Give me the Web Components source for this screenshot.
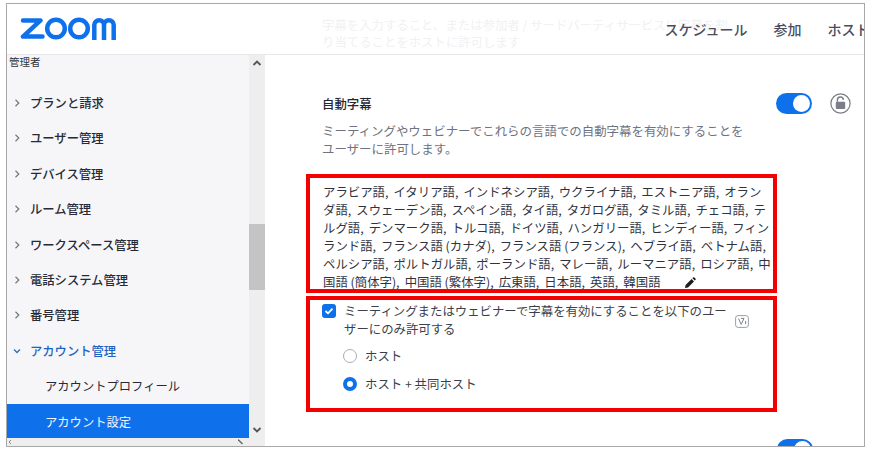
<!DOCTYPE html>
<html lang="ja">
<head>
<meta charset="utf-8">
<title>アカウント設定</title>
<style>
html, body { margin: 0; padding: 0; background: #fff; }
body { font-family: "Noto Sans CJK JP", "Noto Sans", sans-serif; width: 874px; height: 458px; overflow: hidden; }
</style>
</head>
<body>
<zoom-window>
  <zoom-header></zoom-header>
  <zoom-sidebar>
    <nav-item>プランと請求</nav-item>
    <nav-item>ユーザー管理</nav-item>
    <nav-item>デバイス管理</nav-item>
    <nav-item>ルーム管理</nav-item>
    <nav-item>ワークスペース管理</nav-item>
    <nav-item>電話システム管理</nav-item>
    <nav-item>番号管理</nav-item>
    <nav-item state="open">アカウント管理</nav-item>
    <nav-item state="sub">アカウントプロフィール</nav-item>
    <nav-item state="active">アカウント設定</nav-item>
  </zoom-sidebar>
  <caption-settings></caption-settings>
</zoom-window>

<script>
class ZoomWindow extends HTMLElement {
    connectedCallback() {
        this.attachShadow({ mode: 'open' });
        this.shadowRoot.innerHTML = `
            <style>
                :host {
                    display: grid;
                    grid-template-columns: 258px 1fr;
                    grid-template-rows: 51px 1fr;
                    box-sizing: border-box;
                    width: 859px;
                    height: 444px;
                    margin: 3px 0 0 6px;
                    border: 1px solid #a8a8a8;
                    overflow: hidden;
                }
                ::slotted(zoom-header) { grid-column: 1 / 3; }
            </style>
            <slot></slot>
        `;
    }
}

class ZoomHeader extends HTMLElement {
    connectedCallback() {
        this.attachShadow({ mode: 'open' });
        this.shadowRoot.innerHTML = `
            <style>
                :host {
                    display: flex;
                    align-items: center;
                    position: relative;
                    box-sizing: border-box;
                    height: 51px;
                    padding-left: 13px;
                    border-bottom: 1px solid #e8e8e8;
                    overflow: hidden;
                }
                svg { display: block; margin-top: -1px; }
                .ghost {
                    position: absolute;
                    left: 315px;
                    top: 13px;
                    width: 418px;
                    font-size: 12.4px;
                    line-height: 17px;
                    color: #f0f1f3;
                }
                nav {
                    position: relative;
                    display: flex;
                    gap: 26px;
                    margin-left: auto;
                    margin-right: -5.5px;
                    font-size: 14px;
                    font-weight: 500;
                    color: #4a4d5e;
                    white-space: nowrap;
                }
            </style>
            <svg width="97" height="23" viewBox="0 0 97 23" fill="none" stroke="#0e71eb" stroke-width="4.5">
                <path d="M3 3.4H20.5L3 19.6H22.5" stroke-linejoin="round" stroke-linecap="round"/>
                <circle cx="36" cy="11.5" r="8.8"/>
                <circle cx="59" cy="11.5" r="8.8"/>
                <path d="M74.3 23V8A4.85 4.85 0 0 1 84 8V23M84 8A4.85 4.85 0 0 1 93.7 8V23"/>
            </svg>
            <div class="ghost">字幕を入力すること、または参加者 / サードパーティサービスに字幕を割り当てることをホストに許可します</div>
            <nav><span>スケジュール</span><span>参加</span><span>ホスト</span></nav>
        `;
    }
}

class ZoomSidebar extends HTMLElement {
    connectedCallback() {
        this.attachShadow({ mode: 'open' });
        this.shadowRoot.innerHTML = `
            <style>
                :host {
                    display: grid;
                    grid-template-columns: 242px 16px;
                    grid-template-rows: 1fr 8px;
                    min-height: 0;
                    overflow: hidden;
                }
                .list {
                    grid-column: 1;
                    grid-row: 1;
                    display: flex;
                    flex-direction: column;
                    min-height: 0;
                    background: #f6f6f9;
                    overflow: hidden;
                }
                .role {
                    flex: none;
                    height: 30.4px;
                    padding-left: 2px;
                    font-size: 10.5px;
                    line-height: 14px;
                    color: #33363f;
                }
                .vbar {
                    grid-column: 2;
                    grid-row: 1 / 3;
                    display: flex;
                    flex-direction: column;
                    align-items: center;
                    background: #eeeeee;
                }
                .vbar svg { margin: 5px 0; flex: none; }
                .vbar svg:last-child { margin-bottom: 13px; }
                .thumb {
                    align-self: stretch;
                    height: 66px;
                    margin-top: 153px;
                    margin-bottom: auto;
                    background: #c4c4c4;
                }
                .hbar {
                    grid-column: 1;
                    grid-row: 2;
                    display: flex;
                    justify-content: space-between;
                    align-items: center;
                    padding: 0 6px 0 1px;
                    background: #eeeeee;
                }
            </style>
            <div class="list">
                <div class="role">管理者</div>
                <slot></slot>
            </div>
            <div class="vbar">
                <svg width="10" height="6" viewBox="0 0 10 6" fill="none" stroke="#555" stroke-width="1.8"><path d="M1.5 5L5 1.5 8.5 5"/></svg>
                <div class="thumb"></div>
                <svg width="10" height="6" viewBox="0 0 10 6" fill="none" stroke="#555" stroke-width="1.8"><path d="M1.5 1L5 4.5 8.5 1"/></svg>
            </div>
            <div class="hbar">
                <svg width="3" height="6" viewBox="0 0 3 6" fill="none" stroke="#888"><path d="M3 1L1 3l2 2"/></svg>
                <svg width="5" height="6" viewBox="0 0 5 6" fill="none" stroke="#666" stroke-width="1.4"><path d="M0 0.5L4.5 5"/></svg>
            </div>
        `;
    }
}

class NavItem extends HTMLElement {
    connectedCallback() {
        this.attachShadow({ mode: 'open' });
        const state = this.getAttribute('state') || '';
        const chevron = state === 'open'
            ? '<svg width="8" height="8" viewBox="0 0 8 8" fill="none" stroke="#2d6fc4" stroke-width="1.3"><path d="M1 2.5L4 5.5 7 2.5"/></svg>'
            : state === '' ? '<svg width="8" height="8" viewBox="0 0 8 8" fill="none" stroke="#777" stroke-width="1.2"><path d="M2.5 .8L5.8 4 2.5 7.2"/></svg>' : '';
        this.shadowRoot.innerHTML = `
            <style>
                :host {
                    display: flex;
                    align-items: center;
                    flex: none;
                    height: 35.4px;
                    padding-left: 6px;
                    font-size: 12.3px;
                    font-weight: 500;
                    color: #272a35;
                    white-space: nowrap;
                }
                :host([state="open"]) { color: #1b64c4; }
                :host([state="sub"]), :host([state="active"]) { padding-left: 38px; font-weight: 400; }
                :host([state="active"]) { background: #0e71eb; color: #eef5ff; }
                svg { flex: none; margin-right: 9px; }
            </style>
            ${chevron}<slot></slot>
        `;
    }
}

class ToggleSwitch extends HTMLElement {
    connectedCallback() {
        this.attachShadow({ mode: 'open' });
        this.shadowRoot.innerHTML = `
            <style>
                :host {
                    display: flex;
                    justify-content: flex-end;
                    align-items: center;
                    box-sizing: border-box;
                    flex: none;
                    width: 36px;
                    height: 21px;
                    padding: 2px;
                    border-radius: 11px;
                    background: #0e71eb;
                }
                i { display: block; width: 17px; height: 17px; border-radius: 50%; background: #fff; }
            </style>
            <i></i>
        `;
    }
}

class LockIcon extends HTMLElement {
    connectedCallback() {
        this.attachShadow({ mode: 'open' });
        this.shadowRoot.innerHTML = `
            <style>:host { display: block; flex: none; width: 21px; height: 21px; } svg { display: block; }</style>
            <svg width="21" height="21" viewBox="0 0 21 21" fill="none">
                <circle cx="10.5" cy="10.5" r="9.6" stroke="#7a7e88" stroke-width="1.2"/>
                <path d="M7.4 8.8V7.2a3 3 0 0 1 6 -.3" stroke="#7a7e88" stroke-width="1.4"/>
                <rect x="5.8" y="8.8" width="9.4" height="7.2" rx="1" fill="#7a7e88"/>
            </svg>
        `;
    }
}

class RadioOption extends HTMLElement {
    connectedCallback() {
        this.attachShadow({ mode: 'open' });
        this.shadowRoot.innerHTML = `
            <style>
                :host {
                    display: flex;
                    align-items: center;
                    gap: 8px;
                    height: 14px;
                    font-size: 12.4px;
                    color: #3c3f4b;
                }
                .dot {
                    box-sizing: border-box;
                    flex: none;
                    width: 14px;
                    height: 14px;
                    border: 1px solid #a9adb5;
                    border-radius: 50%;
                    background: #fff;
                }
                :host([checked]) .dot { border: 4px solid #0e71eb; }
            </style>
            <span class="dot"></span><slot></slot>
        `;
    }
}

class CaptionSettings extends HTMLElement {
    connectedCallback() {
        this.attachShadow({ mode: 'open' });
        this.shadowRoot.innerHTML = `
            <style>
                :host {
                    display: block;
                    min-height: 0;
                    padding: 38px 0 0 41px;
                    overflow: hidden;
                    font-size: 12.4px;
                    color: #23252f;
                }
                .head {
                    display: flex;
                    align-items: center;
                    width: 545px;
                    padding-left: 16px;
                    box-sizing: border-box;
                }
                .head b { flex: 1; font-weight: 500; color: #23252f; }
                .head lock-icon { margin-left: 18px; }
                .desc {
                    width: 425px;
                    margin: 8px 0 0 16px;
                    font-size: 12.45px;
                    line-height: 18px;
                    color: #6e7380;
                }
                .box {
                    box-sizing: border-box;
                    width: 471px;
                    border: 4px solid #f40000;
                }
                .langs {
                    height: 119px;
                    margin-top: 16px;
                    padding: 5px 0 0 13px;
                    line-height: 18px;
                    word-spacing: 2.3px;
                    white-space: nowrap;
                    color: #30333e;
                    overflow: hidden;
                }
                .langs span { word-spacing: 0; }
                .langs svg { margin-left: 23px; vertical-align: -2px; }
                .only {
                    display: flex;
                    flex-direction: column;
                    height: 116px;
                    margin-top: 3px;
                    padding: 2px 0 0 12px;
                }
                .check { display: flex; align-items: flex-start; gap: 8px; }
                .tick {
                    flex: none;
                    display: flex;
                    align-items: center;
                    justify-content: center;
                    width: 14px;
                    height: 14px;
                    margin-top: 2px;
                    border-radius: 3px;
                    background: #0e71eb;
                }
                .check p { width: 385px; margin: 0; line-height: 18px; color: #3c3f4b; }
                .badge { margin: 13px 0 0 -2px; flex: none; }
                radio-option { margin-left: 21px; }
                radio-option:first-of-type { margin-top: 11px; }
                radio-option + radio-option { margin-top: 14px; }
                .next { display: flex; width: 507px; justify-content: flex-end; margin-top: 27px; }
            </style>
            <div class="head">
                <b>自動字幕</b>
                <toggle-switch></toggle-switch>
                <lock-icon></lock-icon>
            </div>
            <div class="desc">ミーティングやウェビナーでこれらの言語での自動字幕を有効にすることをユーザーに許可します。</div>
            <div class="box langs">アラビア語, イタリア語, インドネシア語, ウクライナ語, エストニア語, オラン<br>ダ語, スウェーデン語, スペイン語, タイ語, タガログ語, タミル語, チェコ語, テ<br>ルグ語, デンマーク語, トルコ語, ドイツ語, ハンガリー語, ヒンディー語, フィン<br>ランド語, <span>フランス語 (カナダ)</span>, <span>フランス語 (フランス)</span>, ヘブライ語, ベトナム語,<br>ペルシア語, ポルトガル語, ポーランド語, マレー語, ルーマニア語, ロシア語, 中<br><span>国語 (簡体字)</span>, <span>中国語 (繁体字)</span>, 広東語, 日本語, 英語, 韓国語<svg width="12" height="12" viewBox="0 0 12 12" fill="#1d1d1f"><path d="M1 11l.6-3L7.6 2l2.4 2.4-6 6zM8.4 1.2l.6-.6a1 1 0 0 1 1.4 0l1 1a1 1 0 0 1 0 1.4l-.6.6z"/></svg></div>
            <div class="box only">
                <div class="check">
                    <span class="tick"><svg width="10" height="8" viewBox="0 0 10 8" fill="none" stroke="#fff" stroke-width="1.8"><path d="M1.5 4L4 6.3 8.5 1.6"/></svg></span>
                    <p>ミーティングまたはウェビナーで字幕を有効にすることを以下のユーザーにのみ許可する</p>
                    <svg class="badge" width="14" height="13" viewBox="0 0 14 13" fill="none"><rect x=".6" y=".6" width="12.8" height="11.8" rx="2.5" stroke="#9a9fa8"/><path d="M3.6 3.6L6.2 9.4 9 3.4H6M10.6 6v3.2" stroke="#7d828c"/></svg>
                </div>
                <radio-option>ホスト</radio-option>
                <radio-option checked>ホスト + 共同ホスト</radio-option>
            </div>
            <div class="next"><toggle-switch></toggle-switch></div>
        `;
    }
}

customElements.define('zoom-window', ZoomWindow);
customElements.define('zoom-header', ZoomHeader);
customElements.define('zoom-sidebar', ZoomSidebar);
customElements.define('nav-item', NavItem);
customElements.define('toggle-switch', ToggleSwitch);
customElements.define('lock-icon', LockIcon);
customElements.define('radio-option', RadioOption);
customElements.define('caption-settings', CaptionSettings);
</script>
</body>
</html>
